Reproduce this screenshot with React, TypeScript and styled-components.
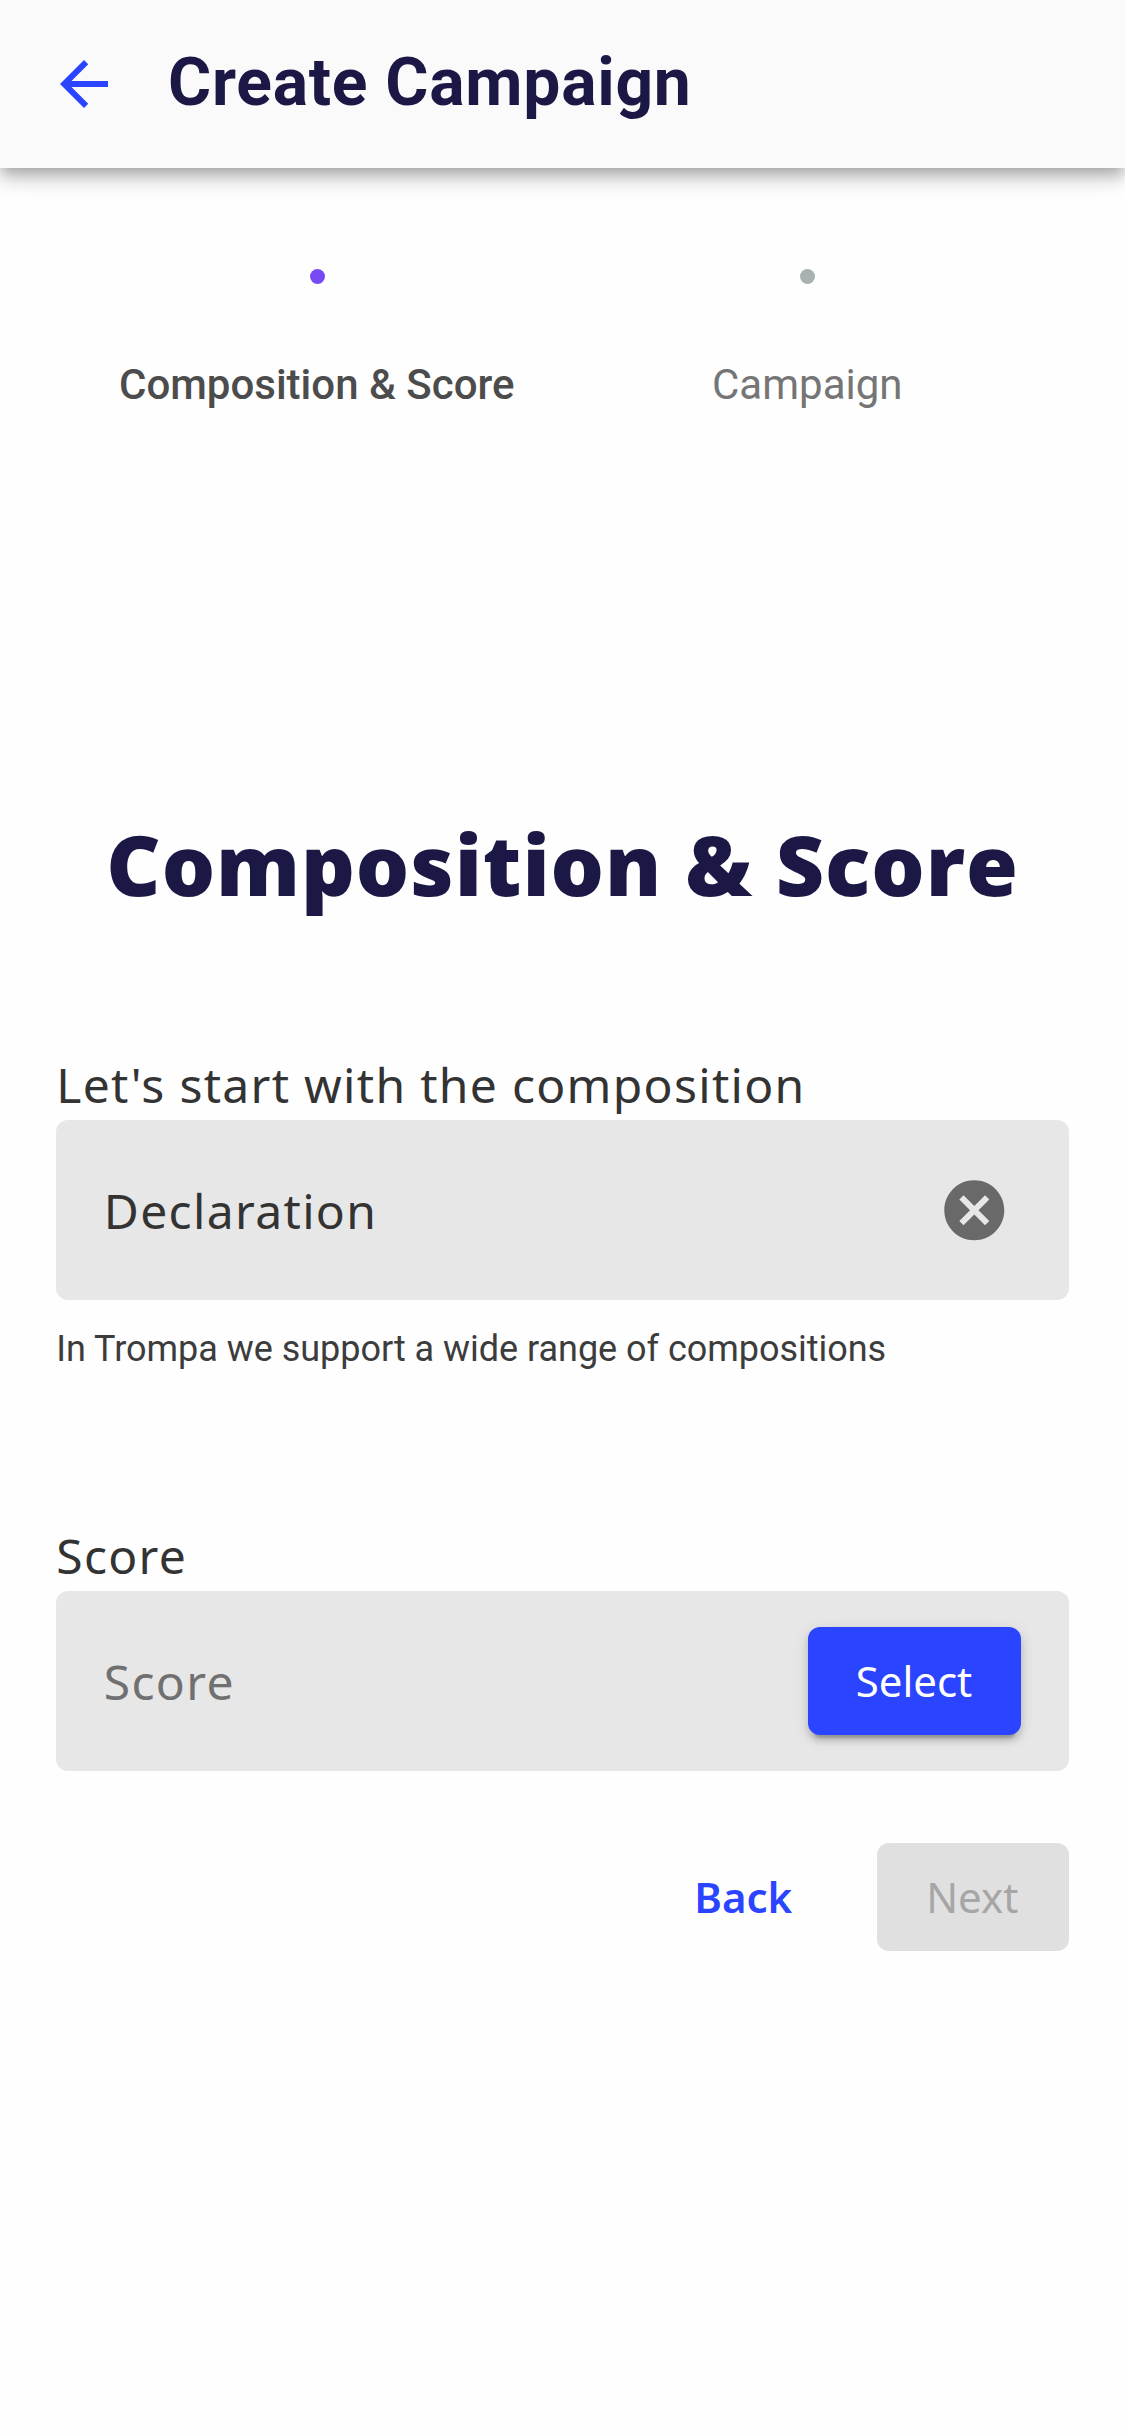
import React from "react";
import styled, { createGlobalStyle } from "styled-components";

const GlobalStyle = createGlobalStyle`
  * { box-sizing: border-box; }
  body { margin: 0; background: #fefefe; }
`;

const sans = `"Noto Sans", "Open Sans", sans-serif`;
const roboto = `Roboto, sans-serif`;

const Page = styled.div`
  min-height: 2436px;
  background: #fefefe;
  font-family: ${sans};
  color: #333;
`;

const AppBar = styled.header`
  position: relative;
  display: flex;
  align-items: center;
  height: 168px;
  padding: 0 48px;
  background: #fafafa;
  box-shadow: 0 6px 12px -3px rgba(0, 0, 0, 0.2), 0 12px 15px 0 rgba(0, 0, 0, 0.14),
    0 3px 30px 0 rgba(0, 0, 0, 0.12);
`;

const IconButton = styled.button`
  display: flex;
  padding: 0;
  border: 0;
  background: none;
`;

const Title = styled.h1`
  margin: 0 0 2px 48px;
  font: 700 66px/84px ${roboto};
  letter-spacing: 0.75px;
  color: #1b1846;
`;

const Stepper = styled.ol`
  display: flex;
  margin: 0;
  padding: 101px 72px 0;
  list-style: none;
`;

const Step = styled.li`
  display: flex;
  flex: 1;
  flex-direction: column;
  align-items: center;
  gap: 71px;
`;

const Dot = styled.span<{ $active?: boolean }>`
  width: 15px;
  height: 15px;
  border-radius: 50%;
  background: ${(p) => (p.$active ? "#784af4" : "#a9b0b2")};
`;

const StepLabel = styled.span<{ $active?: boolean }>`
  padding-right: 1px;
  font: ${(p) => (p.$active ? 500 : 400)} 42px/60px ${roboto};
  color: ${(p) => (p.$active ? "#4c4c4c" : "#757575")};
`;

const Form = styled.main`
  padding: 0 56.25px;
`;

const Heading = styled.h2`
  margin: 389px 0 0;
  font: 800 84px/120px "Open Sans", sans-serif;
  letter-spacing: 0.9px;
  text-align: center;
  color: #1b1846;
`;

const Field = styled.section<{ $top: number }>`
  display: flex;
  flex-direction: column;
  margin-top: ${(p) => p.$top}px;
`;

const FieldLabel = styled.label`
  margin-bottom: 2.3px;
  font: 400 48px/66px ${sans};
  letter-spacing: 1.3px;
`;

const FieldBox = styled.div<{ $right: number }>`
  display: flex;
  align-items: center;
  justify-content: space-between;
  height: 180px;
  padding: 0 ${(p) => p.$right}px 0 47.5px;
  border-radius: 12px;
  background: #e7e7e7;
`;

const Value = styled.span<{ $placeholder?: boolean }>`
  padding-top: 2px;
  font: 400 48px/66px ${sans};
  letter-spacing: 1.35px;
  color: ${(p) => (p.$placeholder ? "#707070" : "#333")};
`;

const Helper = styled.p`
  margin: 28px 0 0;
  font: 400 36px/42px ${roboto};
  letter-spacing: -0.03px;
  color: #3c3c3c;
`;

const Actions = styled.footer`
  display: flex;
  justify-content: flex-end;
  gap: 36px;
  margin-top: 72px;
`;

const Button = styled.button<{ $kind: "primary" | "text" | "disabled" }>`
  min-width: 192px;
  height: 108px;
  padding: 0 48.5px 0 47.5px;
  border: 0;
  border-radius: 12px;
  font: ${(p) => (p.$kind === "text" ? 600 : 400)} 42px/108px ${sans};
  color: ${(p) => ({ primary: "#fff", text: "#2b44ff", disabled: "#a6a6a6" })[p.$kind]};
  background: ${(p) => ({ primary: "#2b44ff", text: "none", disabled: "#e0e0e0" })[p.$kind]};
  box-shadow: ${(p) =>
    p.$kind === "primary"
      ? "0 9px 3px -6px rgba(0,0,0,.2), 0 6px 6px 0 rgba(0,0,0,.14), 0 3px 15px 0 rgba(0,0,0,.12)"
      : "none"};
`;

const BackArrow = () => (
  <svg width="72" height="72" viewBox="0 0 24 24" fill="#2b44ff">
    <path d="M20 11H7.83l5.59-5.59L12 4l-8 8 8 8 1.41-1.41L7.83 13H20v-2z" />
  </svg>
);

const ClearIcon = () => (
  <svg width="72" height="72" viewBox="-0.1 -0.1 24 24" fill="#696969">
    <path d="M12 2C6.47 2 2 6.47 2 12s4.47 10 10 10 10-4.47 10-10S17.53 2 12 2zm5 13.59L15.59 17 12 13.41 8.41 17 7 15.59 10.59 12 7 8.41 8.41 7 12 10.59 15.59 7 17 8.41 13.41 12 17 15.59z" />
  </svg>
);

export default function App() {
  return (
    <Page>
      <GlobalStyle />
      <AppBar>
        <IconButton aria-label="Go back">
          <BackArrow />
        </IconButton>
        <Title>Create Campaign</Title>
      </AppBar>
      <Stepper>
        <Step>
          <Dot $active />
          <StepLabel $active>Composition &amp; Score</StepLabel>
        </Step>
        <Step>
          <Dot />
          <StepLabel>Campaign</StepLabel>
        </Step>
      </Stepper>
      <Form>
        <Heading>Composition &amp; Score</Heading>
        <Field $top={128}>
          <FieldLabel>Let's start with the composition</FieldLabel>
          <FieldBox $right={58.5}>
            <Value>Declaration</Value>
            <IconButton aria-label="Clear">
              <ClearIcon />
            </IconButton>
          </FieldBox>
          <Helper>In Trompa we support a wide range of compositions</Helper>
        </Field>
        <Field $top={152.7}>
          <FieldLabel>Score</FieldLabel>
          <FieldBox $right={48}>
            <Value $placeholder>Score</Value>
            <Button $kind="primary">Select</Button>
          </FieldBox>
        </Field>
        <Actions>
          <Button $kind="text">Back</Button>
          <Button $kind="disabled">Next</Button>
        </Actions>
      </Form>
    </Page>
  );
}
